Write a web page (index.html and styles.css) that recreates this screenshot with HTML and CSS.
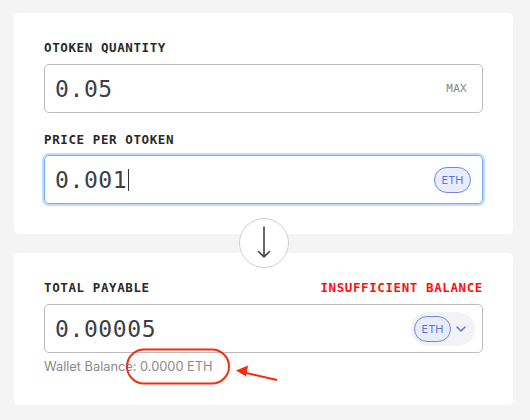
FILE: index.html
```html
<!DOCTYPE html>
<html>
<head>
<meta charset="utf-8">
<link rel="stylesheet" href="styles.css">
</head>
<body>
<div class="page">
  <section class="card card-top">
    <div class="label-row"><span class="label">OTOKEN QUANTITY</span></div>
    <div class="field">
      <span class="value">0.05</span>
      <span class="max">MAX</span>
    </div>
    <div class="label-row second"><span class="label">PRICE PER OTOKEN</span></div>
    <div class="field focused">
      <span class="value">0.001<span class="caret"></span></span>
      <span class="pill">ETH</span>
    </div>
  </section>
  <div class="divider">
    <div class="swap">
      <svg width="14" height="34" viewBox="0 0 14 34"><path d="M7 1 V31 M1.5 25.5 L7 31 L12.5 25.5" fill="none" stroke="#444" stroke-width="1.6" stroke-linecap="round" stroke-linejoin="round"/></svg>
    </div>
  </div>
  <section class="card card-bottom">
    <div class="label-row"><span class="label">TOTAL PAYABLE</span><span class="label error">INSUFFICIENT BALANCE</span></div>
    <div class="field">
      <span class="value">0.00005</span>
      <span class="select">
        <span class="pill">ETH</span>
        <svg class="chev" width="10" height="6" viewBox="0 0 10 6"><path d="M1 1 L5 5 L9 1" fill="none" stroke="#5a74e6" stroke-width="1.6" stroke-linecap="round" stroke-linejoin="round"/></svg>
      </span>
    </div>
    <div class="wallet">Wallet Balance: 0.0000 ETH</div>
  </section>
</div>
<svg class="annot" width="530" height="420" viewBox="0 0 530 420">
  <rect x="127" y="349.5" width="102" height="34" rx="17" ry="17" fill="none" stroke="#f42c10" stroke-width="2"/>
  <path d="M244 372.5 L277 380" stroke="#f42c10" stroke-width="2" fill="none"/>
  <path d="M236 370.5 L248 365.5 L246 376.5 Z" fill="#f42c10"/>
</svg>
</body>
</html>
```
FILE: styles.css
```css
html, body {
  margin: 0;
  padding: 0;
  background: #f4f4f4;
  width: 530px;
  height: 420px;
  overflow: hidden;
}
.page {
  padding: 13px 17px 0 14px;
  display: flex;
  flex-direction: column;
}
.card {
  background: #fff;
  border-radius: 5px;
  padding: 26px 30px 0 30px;
}
.card-top {
  height: 221px;
  box-sizing: border-box;
}
.card-bottom {
  height: 152px;
  box-sizing: border-box;
}
.label-row {
  display: flex;
  justify-content: space-between;
  align-items: center;
  height: 16px;
  margin-bottom: 9px;
}
.label-row.second {
  margin-top: 18px;
  margin-bottom: 8px;
}
.label {
  font-family: "DejaVu Sans Mono", monospace;
  font-weight: bold;
  font-size: 12.5px;
  letter-spacing: 0.6px;
  color: #2a2a2a;
}
.label.error {
  color: #ff1010;
}
.field {
  height: 49px;
  box-sizing: border-box;
  border: 1px solid #bcbcbc;
  border-radius: 5px;
  display: flex;
  align-items: center;
  justify-content: space-between;
  padding: 0 15px 0 10px;
}
.field.focused {
  border-color: #78a8f2;
  box-shadow: 0 0 0 2px #c2dcff;
  padding-right: 11px;
}
.value {
  font-family: "DejaVu Sans Mono", monospace;
  font-size: 23px;
  letter-spacing: 0.6px;
  color: #3b3f46;
  display: flex;
  align-items: center;
}
.caret {
  display: inline-block;
  width: 1px;
  height: 22px;
  background: #333;
  margin-left: 1px;
}
.max {
  font-family: "DejaVu Sans Mono", monospace;
  font-size: 11px;
  color: #888;
  letter-spacing: 0.3px;
}
.pill {
  font-family: Inter, "Noto Sans", sans-serif;
  font-size: 11px;
  color: #5a72e2;
  background: #e9edfb;
  border: 1px solid #6e88ea;
  border-radius: 13px;
  width: 37px;
  height: 26px;
  box-sizing: border-box;
  display: flex;
  align-items: center;
  justify-content: center;
}
.select {
  display: flex;
  align-items: center;
  gap: 5px;
  background: #f3f3f5;
  border-radius: 17px;
  height: 34px;
  padding: 0 9px 0 3px;
  margin-right: -8px;
}
.chev {
  display: block;
}
.divider {
  height: 19px;
  position: relative;
}
.swap {
  position: absolute;
  left: 225px;
  top: -16px;
  width: 50px;
  height: 50px;
  box-sizing: border-box;
  border: 1px solid #d0d0d0;
  border-radius: 50%;
  background: #fff;
  display: flex;
  align-items: center;
  justify-content: center;
}
.wallet {
  font-family: Inter, "Noto Sans", sans-serif;
  font-size: 12.8px;
  color: #8a8a8a;
  margin-top: 6px;
}
.annot {
  position: absolute;
  top: 0;
  left: 0;
  pointer-events: none;
}
```
